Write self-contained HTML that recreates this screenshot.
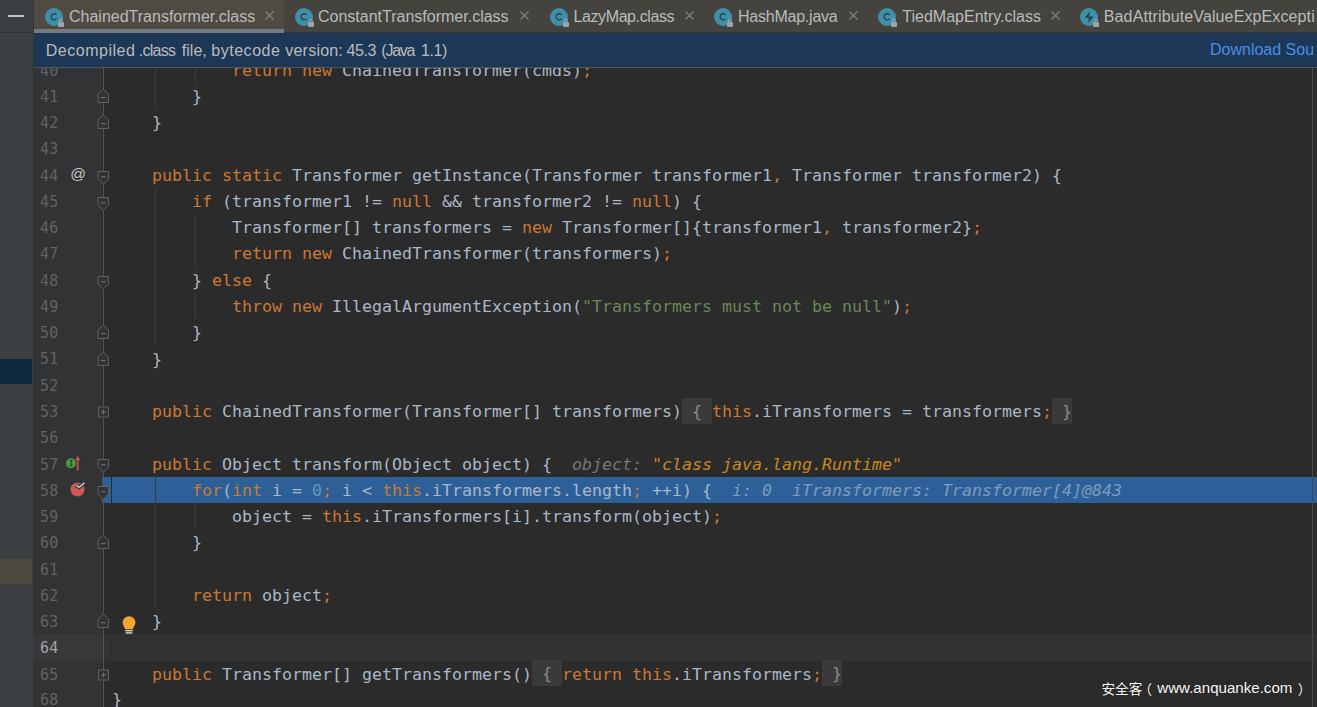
<!DOCTYPE html>
<html lang="zh">
<head>
<meta charset="utf-8">
<title>ChainedTransformer.class</title>
<style>
html,body{margin:0;padding:0;background:#2b2b2b;}
body{width:1317px;height:707px;position:relative;overflow:hidden;font-family:"Liberation Sans","Noto Sans CJK SC",sans-serif;}
div,span,svg{box-sizing:border-box;}
#side{position:absolute;left:0;top:0;width:33px;height:707px;background:#3c3f41;}
#side .hl1{position:absolute;left:0;top:359px;width:32px;height:25px;background:#0d293e;}
#side .hl2{position:absolute;left:0;top:559px;width:32px;height:25px;background:#4d493f;}
#side .sep{position:absolute;left:0;top:32px;width:32px;height:1px;background:#2f3133;}
#side .dash{position:absolute;left:8px;top:15px;width:16px;height:2px;background:#c5c5c5;}
#sideb{position:absolute;left:33px;top:0;width:1px;height:707px;background:#323436;}
#tabs{position:absolute;left:34px;top:0;width:1283px;height:33px;background:#44433e;overflow:hidden;}
.tab{position:absolute;top:0;height:33px;}
.tab.act{background:#4e4b42;}
.tab.act:after{content:"";position:absolute;left:0;right:0;bottom:0;height:4px;background:#747a80;}
.tt{position:absolute;top:0;height:33px;line-height:34px;white-space:nowrap;color:#bbbbbb;font-size:16px;}
.tx{position:absolute;top:11.4px;width:9px;height:9px;}
.ic{position:absolute;top:8px;width:20px;height:20px;}
.tsep{position:absolute;top:0;width:1px;height:32px;background:#4d473b;box-shadow:-1px 0 0 #403f3b;}
#tabb{position:absolute;left:250px;top:32px;width:1040px;height:1px;background:#32322f;}
#banner{position:absolute;left:34px;top:33px;width:1283px;height:35px;background:#1d3857;border-bottom:1px solid #555555;color:#bbbbbb;font-size:16px;white-space:nowrap;overflow:hidden;}
#banner .msg{position:absolute;top:0;height:34px;line-height:36px;}
#banner .dl{position:absolute;left:1176px;top:0;height:34px;width:104.4px;overflow:hidden;line-height:34px;color:#4a8ee6;}
#ed{position:absolute;left:34px;top:68px;width:1283px;height:639px;background:#2b2b2b;}
#gut{position:absolute;left:33px;top:68px;width:69px;height:639px;background:#313335;}
#foldline{position:absolute;left:103px;top:68px;width:1px;height:639px;background:#555555;}
#rm{position:absolute;left:1312px;top:68px;width:1px;height:639px;background:#4a4a4a;}
#clip{position:absolute;left:0;top:68px;width:1317px;height:639px;overflow:hidden;}
#clip > div, #clip > svg, #clip > span{margin-top:-68px;}
.ln{position:absolute;left:40px;color:#606366;font-family:"DejaVu Sans Mono","Liberation Mono",monospace;font-size:16.61px;height:26.27px;line-height:26.27px;white-space:pre;letter-spacing:0.4px;transform:scaleX(0.9);transform-origin:0 0;}
.ln.cur{color:#a4a3a3;}
.row{position:absolute;left:112px;height:26.27px;line-height:26.27px;white-space:pre;color:#a9b7c6;font-family:"DejaVu Sans Mono","Liberation Mono",monospace;font-size:16.61px;}
.k{color:#cc7832;}
.s{color:#6a8759;}
.n{color:#6897bb;}
.f{background:#3a3a3a;color:#8c8c8c;padding:4.47px 0 2.47px 0;}
.h{color:#787878;font-style:italic;}
.hv{color:#c9881f;font-style:italic;}
.hx{color:#7d9cbd;font-style:italic;}
.band{position:absolute;}
.ig{position:absolute;width:1px;background:#3b3b3b;}
.fm{position:absolute;left:96px;width:15px;height:16px;overflow:visible;}
.gi{position:absolute;overflow:visible;}
.at{position:absolute;left:70px;width:16px;text-align:center;color:#c4c4c4;font-size:15.5px;line-height:20px;height:20px;}
.wm{position:absolute;color:#f7f7f7;white-space:nowrap;line-height:20px;height:20px;top:678px;text-shadow:0 0 1px #1a1a1a;}
</style>
</head>
<body>
<div id="side"><div class="dash"></div><div class="sep"></div><div class="hl1"></div><div class="hl2"></div></div><div id="sideb"></div>
<div id="tabs">
<div class="tab act" style="left:0px;width:250px"></div><svg class="ic" style="left:11.0px" viewBox="0 0 20 20"><circle cx="9" cy="9" r="9" fill="#3f8fa8"/><path d="M11.6 6.9 A3.05 3.05 0 1 0 11.6 10.7" fill="none" stroke="#27434f" stroke-width="1.3"/><rect x="13.1" y="14.1" width="5.9" height="4.8" fill="#9aa7b0"/><path d="M14.8 14.3 v-2 a1.2 1.2 0 0 1 2.4 0 v2" fill="none" stroke="#9aa7b0" stroke-width="1.1"/></svg><span class="tt" style="left:35.0px">ChainedTransformer.class</span><svg class="tx" style="left:230.8px" viewBox="0 0 9 9"><path d="M0.5 0.5 L8.5 8.5 M8.5 0.5 L0.5 8.5" stroke="#808486" stroke-width="1.1" fill="none"/></svg>
<div class="tab" style="left:250px;width:254px"></div><svg class="ic" style="left:261.0px" viewBox="0 0 20 20"><circle cx="9" cy="9" r="9" fill="#3f8fa8"/><path d="M11.6 6.9 A3.05 3.05 0 1 0 11.6 10.7" fill="none" stroke="#27434f" stroke-width="1.3"/><rect x="13.1" y="14.1" width="5.9" height="4.8" fill="#9aa7b0"/><path d="M14.8 14.3 v-2 a1.2 1.2 0 0 1 2.4 0 v2" fill="none" stroke="#9aa7b0" stroke-width="1.1"/></svg><span class="tt" style="left:284.0px">ConstantTransformer.class</span><svg class="tx" style="left:485.6px" viewBox="0 0 9 9"><path d="M0.5 0.5 L8.5 8.5 M8.5 0.5 L0.5 8.5" stroke="#808486" stroke-width="1.1" fill="none"/></svg>
<div class="tab" style="left:504px;width:165px"></div><svg class="ic" style="left:515.5px" viewBox="0 0 20 20"><circle cx="9" cy="9" r="9" fill="#3f8fa8"/><path d="M11.6 6.9 A3.05 3.05 0 1 0 11.6 10.7" fill="none" stroke="#27434f" stroke-width="1.3"/><rect x="13.1" y="14.1" width="5.9" height="4.8" fill="#9aa7b0"/><path d="M14.8 14.3 v-2 a1.2 1.2 0 0 1 2.4 0 v2" fill="none" stroke="#9aa7b0" stroke-width="1.1"/></svg><span class="tt" style="left:539.5px;letter-spacing:-0.40px">LazyMap.class</span><svg class="tx" style="left:650.7px" viewBox="0 0 9 9"><path d="M0.5 0.5 L8.5 8.5 M8.5 0.5 L0.5 8.5" stroke="#808486" stroke-width="1.1" fill="none"/></svg>
<div class="tab" style="left:669px;width:164px"></div><svg class="ic" style="left:680.2px" viewBox="0 0 20 20"><circle cx="9" cy="9" r="9" fill="#3f8fa8"/><path d="M11.6 6.9 A3.05 3.05 0 1 0 11.6 10.7" fill="none" stroke="#27434f" stroke-width="1.3"/><rect x="13.1" y="14.1" width="5.9" height="4.8" fill="#9aa7b0"/><path d="M14.8 14.3 v-2 a1.2 1.2 0 0 1 2.4 0 v2" fill="none" stroke="#9aa7b0" stroke-width="1.1"/></svg><span class="tt" style="left:704.0px;letter-spacing:-0.23px">HashMap.java</span><svg class="tx" style="left:814.6px" viewBox="0 0 9 9"><path d="M0.5 0.5 L8.5 8.5 M8.5 0.5 L0.5 8.5" stroke="#808486" stroke-width="1.1" fill="none"/></svg>
<div class="tab" style="left:833px;width:203px"></div><svg class="ic" style="left:843.6px" viewBox="0 0 20 20"><circle cx="9" cy="9" r="9" fill="#3f8fa8"/><path d="M11.6 6.9 A3.05 3.05 0 1 0 11.6 10.7" fill="none" stroke="#27434f" stroke-width="1.3"/><rect x="13.1" y="14.1" width="5.9" height="4.8" fill="#9aa7b0"/><path d="M14.8 14.3 v-2 a1.2 1.2 0 0 1 2.4 0 v2" fill="none" stroke="#9aa7b0" stroke-width="1.1"/></svg><span class="tt" style="left:868.3px">TiedMapEntry.class</span><svg class="tx" style="left:1016.6px" viewBox="0 0 9 9"><path d="M0.5 0.5 L8.5 8.5 M8.5 0.5 L0.5 8.5" stroke="#808486" stroke-width="1.1" fill="none"/></svg>
<div class="tab" style="left:1036px;width:330px"></div><svg class="ic" style="left:1046.2px" viewBox="0 0 20 20"><circle cx="9" cy="9" r="9" fill="#3f8fa8"/><path d="M9.7 3.5 L4.7 9.8 H8.9 L8.1 14.8 L13.6 8.5 H9.2 Z" fill="#27434f"/><rect x="13.1" y="14.1" width="5.9" height="4.8" fill="#9aa7b0"/><path d="M14.8 14.3 v-2 a1.2 1.2 0 0 1 2.4 0 v2" fill="none" stroke="#9aa7b0" stroke-width="1.1"/></svg><span class="tt" style="left:1069.8px;letter-spacing:0.12px;width:211.3px;overflow:hidden">BadAttributeValueExpException.java</span><svg class="tx" style="left:1346.0px" viewBox="0 0 9 9"><path d="M0.5 0.5 L8.5 8.5 M8.5 0.5 L0.5 8.5" stroke="#808486" stroke-width="1.1" fill="none"/></svg>
<div class="tsep" style="left:504px"></div><div class="tsep" style="left:669px"></div><div id="tabb"></div></div>
<div id="banner"><span class="msg" style="left:11.7px;letter-spacing:0.522px">Decompiled</span> <span class="msg" style="left:104.7px;letter-spacing:-0.700px">.class</span> <span class="msg" style="left:147.7px;letter-spacing:0.050px">file,</span> <span class="msg" style="left:177.2px;letter-spacing:0.543px">bytecode</span> <span class="msg" style="left:251.3px;letter-spacing:0.214px">version:</span> <span class="msg" style="left:312.5px;letter-spacing:-0.400px">45.3</span> <span class="msg" style="left:347.3px;letter-spacing:-1.250px">(Java</span> <span class="msg" style="left:387.1px;letter-spacing:-0.433px">1.1)</span><span class="dl">Download Sources</span></div>
<div id="ed"></div><div id="gut"></div>
<div id="clip">
<div class="band" style="top:633.74px;left:33px;width:69px;height:27.07px;background:#36383a"></div><div class="band" style="top:633.74px;left:102px;width:1215px;height:27.07px;background:#323232"></div><div class="band" style="top:633.74px;left:111px;width:1px;height:27.07px;background:#2b2b2b"></div>
<div class="band" style="top:476.92px;left:102px;width:1215px;height:26.27px;background:#2d6099"></div><div class="band" style="top:476.92px;left:111px;width:1px;height:26.27px;background:#2b2b2b"></div>
<div class="ig" style="left:155px;top:56.60px;height:52.54px"></div><div class="ig" style="left:195px;top:56.60px;height:26.27px"></div><div class="ig" style="left:155px;top:187.95px;height:157.62px"></div><div class="ig" style="left:195px;top:214.22px;height:52.54px"></div><div class="ig" style="left:195px;top:293.03px;height:26.27px"></div><div class="ig" style="left:155px;top:476.92px;height:131.35px"></div><div class="ig" style="left:195px;top:503.19px;height:26.27px"></div>
</div>
<div id="foldline"></div><div id="rm"></div>
<div id="clip2" style="position:absolute;left:0;top:68px;width:1317px;height:639px;overflow:hidden"><div style="position:absolute;left:0;top:-68px;width:1317px;height:707px">
<div class="ln" style="top:57.50px">40</div><div class="row" style="top:57.60px">            <span class="k">return new </span>ChainedTransformer(cmds)<span class="k">;</span></div>
<div class="ln" style="top:83.77px">41</div><div class="row" style="top:83.87px">        }</div>
<div class="ln" style="top:110.04px">42</div><div class="row" style="top:110.14px">    }</div>
<div class="ln" style="top:136.31px">43</div>
<div class="ln" style="top:162.58px">44</div><div class="row" style="top:162.68px">    <span class="k">public static </span>Transformer getInstance(Transformer transformer1<span class="k">,</span> Transformer transformer2) {</div>
<div class="ln" style="top:188.85px">45</div><div class="row" style="top:188.95px">        <span class="k">if </span>(transformer1 != <span class="k">null </span>&amp;&amp; transformer2 != <span class="k">null</span>) {</div>
<div class="ln" style="top:215.12px">46</div><div class="row" style="top:215.22px">            Transformer[] transformers = <span class="k">new </span>Transformer[]{transformer1<span class="k">,</span> transformer2}<span class="k">;</span></div>
<div class="ln" style="top:241.39px">47</div><div class="row" style="top:241.49px">            <span class="k">return new </span>ChainedTransformer(transformers)<span class="k">;</span></div>
<div class="ln" style="top:267.66px">48</div><div class="row" style="top:267.76px">        } <span class="k">else </span>{</div>
<div class="ln" style="top:293.93px">49</div><div class="row" style="top:294.03px">            <span class="k">throw new </span>IllegalArgumentException(<span class="s">"Transformers must not be null"</span>)<span class="k">;</span></div>
<div class="ln" style="top:320.20px">50</div><div class="row" style="top:320.30px">        }</div>
<div class="ln" style="top:346.47px">51</div><div class="row" style="top:346.57px">    }</div>
<div class="ln" style="top:372.74px">52</div>
<div class="ln" style="top:399.01px">53</div><div class="row" style="top:399.11px">    <span class="k">public </span>ChainedTransformer(Transformer[] transformers)<span class="f"> { </span><span class="k">this</span>.iTransformers = transformers<span class="k">;</span><span class="f"> }</span></div>
<div class="ln" style="top:425.28px">56</div>
<div class="ln" style="top:451.55px">57</div><div class="row" style="top:451.65px">    <span class="k">public </span>Object transform(Object object) {  <span class="h">object: </span><span class="hv">"class java.lang.Runtime"</span></div>
<div class="ln" style="top:477.82px">58</div><div class="row" style="top:477.92px">        <span class="k">for</span>(<span class="k">int </span>i = <span class="n">0</span><span class="k">; </span>i &lt; <span class="k">this</span>.iTransformers.length<span class="k">; </span>++i) {  <span class="hx">i: 0  iTransformers: Transformer[4]@843</span></div>
<div class="ln" style="top:504.09px">59</div><div class="row" style="top:504.19px">            object = <span class="k">this</span>.iTransformers[i].transform(object)<span class="k">;</span></div>
<div class="ln" style="top:529.66px">60</div><div class="row" style="top:529.76px">        }</div>
<div class="ln" style="top:556.63px">61</div>
<div class="ln" style="top:582.90px">62</div><div class="row" style="top:583.00px">        <span class="k">return </span>object<span class="k">;</span></div>
<div class="ln" style="top:608.57px">63</div><div class="row" style="top:608.67px">    }</div>
<div class="ln cur" style="top:635.44px">64</div>
<div class="ln" style="top:661.71px">65</div><div class="row" style="top:661.81px">    <span class="k">public </span>Transformer[] getTransformers()<span class="f"> { </span><span class="k">return this</span>.iTransformers<span class="k">;</span><span class="f"> }</span></div>
<div class="ln" style="top:687.08px">68</div><div class="row" style="top:687.18px">}</div>
<svg class="fm" style="top:88.01px" viewBox="0 0 15 16"><path d="M2 14.5 H12.5 V5.9 L7.25 1.2 L2 5.9 Z" fill="#313335" stroke="#5e6062" stroke-width="1"/><path d="M4.8 9.6 H9.8" stroke="#727577" stroke-width="1"/></svg><svg class="fm" style="top:114.28px" viewBox="0 0 15 16"><path d="M2 14.5 H12.5 V5.9 L7.25 1.2 L2 5.9 Z" fill="#313335" stroke="#5e6062" stroke-width="1"/><path d="M4.8 9.6 H9.8" stroke="#727577" stroke-width="1"/></svg><svg class="fm" style="top:324.44px" viewBox="0 0 15 16"><path d="M2 14.5 H12.5 V5.9 L7.25 1.2 L2 5.9 Z" fill="#313335" stroke="#5e6062" stroke-width="1"/><path d="M4.8 9.6 H9.8" stroke="#727577" stroke-width="1"/></svg><svg class="fm" style="top:350.70px" viewBox="0 0 15 16"><path d="M2 14.5 H12.5 V5.9 L7.25 1.2 L2 5.9 Z" fill="#313335" stroke="#5e6062" stroke-width="1"/><path d="M4.8 9.6 H9.8" stroke="#727577" stroke-width="1"/></svg><svg class="fm" style="top:533.89px" viewBox="0 0 15 16"><path d="M2 14.5 H12.5 V5.9 L7.25 1.2 L2 5.9 Z" fill="#313335" stroke="#5e6062" stroke-width="1"/><path d="M4.8 9.6 H9.8" stroke="#727577" stroke-width="1"/></svg><svg class="fm" style="top:612.80px" viewBox="0 0 15 16"><path d="M2 14.5 H12.5 V5.9 L7.25 1.2 L2 5.9 Z" fill="#313335" stroke="#5e6062" stroke-width="1"/><path d="M4.8 9.6 H9.8" stroke="#727577" stroke-width="1"/></svg>
<svg class="fm" style="top:166.51px" viewBox="0 0 15 16"><path d="M2 4.5 H12.5 V11.8 L7.25 17.4 L2 11.8 Z" fill="#313335" stroke="#5e6062" stroke-width="1"/><path d="M4.8 9.8 H9.8" stroke="#727577" stroke-width="1"/></svg><svg class="fm" style="top:192.78px" viewBox="0 0 15 16"><path d="M2 4.5 H12.5 V11.8 L7.25 17.4 L2 11.8 Z" fill="#313335" stroke="#5e6062" stroke-width="1"/><path d="M4.8 9.8 H9.8" stroke="#727577" stroke-width="1"/></svg><svg class="fm" style="top:271.59px" viewBox="0 0 15 16"><path d="M2 4.5 H12.5 V11.8 L7.25 17.4 L2 11.8 Z" fill="#313335" stroke="#5e6062" stroke-width="1"/><path d="M4.8 9.8 H9.8" stroke="#727577" stroke-width="1"/></svg><svg class="fm" style="top:455.49px" viewBox="0 0 15 16"><path d="M2 4.5 H12.5 V11.8 L7.25 17.4 L2 11.8 Z" fill="#313335" stroke="#5e6062" stroke-width="1"/><path d="M4.8 9.8 H9.8" stroke="#727577" stroke-width="1"/></svg><svg class="fm" style="top:481.75px" viewBox="0 0 15 16"><path d="M2 4.5 H12.5 V11.8 L7.25 17.4 L2 11.8 Z" fill="#313335" stroke="#5e6062" stroke-width="1"/><path d="M4.8 9.8 H9.8" stroke="#727577" stroke-width="1"/></svg>
<svg class="fm" style="top:403.35px" viewBox="0 0 15 16"><rect x="2.5" y="4" width="10" height="10" fill="#313335" stroke="#5e6062" stroke-width="1"/><path d="M5 9 H10 M7.5 6.5 V11.5" stroke="#707375" stroke-width="1"/></svg><svg class="fm" style="top:666.05px" viewBox="0 0 15 16"><rect x="2.5" y="4" width="10" height="10" fill="#313335" stroke="#5e6062" stroke-width="1"/><path d="M5 9 H10 M7.5 6.5 V11.5" stroke="#707375" stroke-width="1"/></svg>
<div class="at" style="top:164.31px">@</div>
<svg class="gi" style="left:64px;top:452.99px;width:20px;height:20px" viewBox="0 0 20 20"><circle cx="7" cy="10.2" r="5" fill="#4b9a3c"/><path d="M5.6 7.8 H8.4 M5.6 12.6 H8.4 M7 7.8 V12.6" stroke="#21401c" stroke-width="1.1" fill="none"/><path d="M13.7 17.6 V6.5" stroke="#c9504e" stroke-width="1.8" fill="none"/><path d="M10.8 7.2 L13.7 2.8 L16.6 7.2 Z" fill="#c9504e"/></svg>
<svg class="gi" style="left:68px;top:479.06px;width:20px;height:20px" viewBox="0 0 20 20"><circle cx="9.5" cy="10.5" r="7" fill="#cd5853"/><path d="M7.8 6.1 L11.1 8.4 L16.6 3.6" stroke="#303234" stroke-width="3.8" fill="none"/><path d="M8 6.2 L11.1 8.3 L16.4 3.8" stroke="#c8cbce" stroke-width="1.6" fill="none"/></svg>
<svg class="gi" style="left:120px;top:614.80px;width:18px;height:22px" viewBox="0 0 18 22"><path d="M9 1.2 a6.4 6.4 0 0 1 6.4 6.4 c0 2.6 -1.6 4 -2.6 6.6 h-7.6 c-1 -2.6 -2.6 -4 -2.6 -6.6 a6.4 6.4 0 0 1 6.4 -6.4 z" fill="#f0a732"/><path d="M5.2 15.7 H12.8" stroke="#d9dcde" stroke-width="1.3"/><path d="M5.6 17.9 H12.4" stroke="#b4b7b9" stroke-width="1.8"/></svg>
</div></div>
<span class="wm" style="left:1101.5px;top:679.5px;font-size:13.6px">安全客</span><span class="wm" style="left:1138.5px;top:679.5px;font-size:13.6px">（</span><span class="wm" style="left:1157.3px;top:677.6px;font-size:15.1px">www.anquanke.com</span><span class="wm" style="left:1297.7px;top:679.5px;font-size:13.6px">）</span>
</body>
</html>
